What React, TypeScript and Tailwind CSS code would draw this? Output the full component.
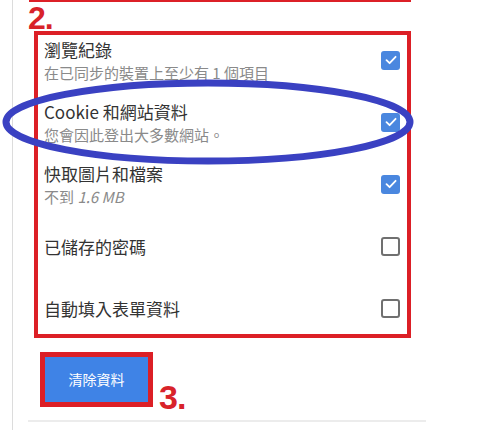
import React from "react";

const font = { fontFamily: '"Noto Sans CJK TC", "Noto Sans", sans-serif' };
const numFont = { fontFamily: '"Liberation Sans", Arial, sans-serif' };

function Check({ on }: { on: boolean }) {
  if (on)
    return (
      <div className="w-[19px] h-[19px] rounded-[3px] bg-[#4a87df] flex items-center justify-center shrink-0">
        <svg width="14" height="14" viewBox="0 0 14 14">
          <path d="M2.5 7.2 L5.6 10.2 L11.6 3.8" fill="none" stroke="#fff" strokeWidth="1.8" strokeLinecap="round" strokeLinejoin="round" />
        </svg>
      </div>
    );
  return <div className="w-[19px] h-[19px] rounded-[3px] border-2 border-[#707070] shrink-0" />;
}

const rows = [
  { t: "瀏覽紀錄", s: "在已同步的裝置上至少有 1 個項目", on: true },
  { t: "Cookie 和網站資料", s: "您會因此登出大多數網站。", on: true },
  { t: "快取圖片和檔案", s: "不到 1.6 MB", on: true },
  { t: "已儲存的密碼", s: "", on: false },
  { t: "自動填入表單資料", s: "", on: false },
];

export default function App() {
  return (
    <div className="relative w-[494px] h-[430px] bg-white overflow-hidden" style={font}>
      <div className="ml-[12px] h-full border-l border-[#dcdcdc] flex flex-col">
        <div className="ml-[16px] w-[382px] h-[2px] bg-[#dc2027]" />
        <div
          className="ml-[15px] h-[29px] text-[32px] leading-[32px] font-bold text-[#d8232a] tracking-[-1px]"
          style={numFont}
        >
          2.
        </div>
        <div className="ml-[21px] w-[377px] h-[307px] border-[4px] border-[#dc1f26] overflow-hidden">
          <div className="-mt-[6px] flex flex-col">
            {rows.map((r) => (
              <div key={r.t} className="h-[62px] flex items-center pl-[6px] pr-[7px]">
                <div className="flex-1 flex flex-col">
                  <div className="text-[17px] leading-[23px] text-[#333]">{r.t}</div>
                  {r.s && (
                    <div className="text-[15px] leading-[20px] text-[#8a8a8a] mt-[2px]">
                      {r.s.includes("MB") ? (
                        <>
                          不到 <span className="italic">1.6 MB</span>
                        </>
                      ) : (
                        r.s
                      )}
                    </div>
                  )}
                </div>
                <Check on={r.on} />
              </div>
            ))}
          </div>
        </div>
        <div className="flex items-end mt-[14px] ml-[27px]">
          <div className="border-[5px] border-[#dc1f26] bg-white">
            <div className="w-[103px] h-[45px] bg-[#3f83e6] text-white text-[14px] flex items-center justify-center">
              清除資料
            </div>
          </div>
          <div
            className="ml-[6px] -mb-[4px] text-[34px] leading-[28px] font-bold text-[#d8232a] tracking-[-1px]"
            style={numFont}
          >
            3.
          </div>
        </div>
        <div className="mt-[13px] ml-[15px] w-[398px] h-[2px] bg-[#ececec]" />
      </div>
      <svg className="absolute left-0 top-0 pointer-events-none" width="494" height="430">
        <ellipse cx="208" cy="122" rx="202" ry="39" fill="none" stroke="#3a41c2" strokeWidth="7" />
      </svg>
    </div>
  );
}
